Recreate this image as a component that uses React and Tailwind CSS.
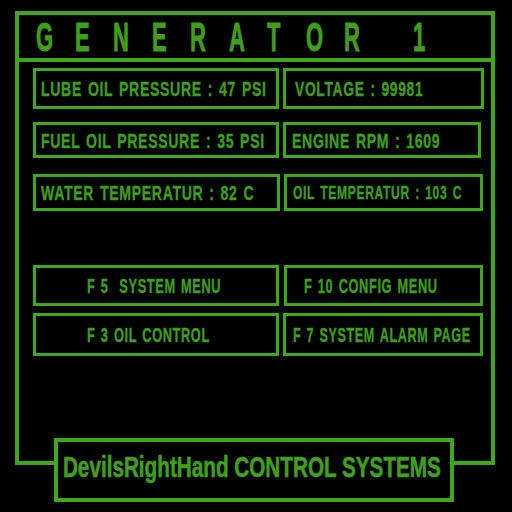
const GREEN = 'border-[#3ea81a]';

const titleLetters = ['G', 'E', 'N', 'E', 'R', 'A', 'T', 'O', 'R', '', '1'];

// condensed look: Liberation Sans Bold squeezed horizontally
const DataBox = ({ width, height, pad, squeeze = 'scale-x-[0.67]', size = 'text-[21px]', children }) => (
  <div className={`${width} ${height} ${pad} shrink-0 border-[3px] ${GREEN} flex items-center`}>
    <span
      className={`inline-block origin-left ${squeeze} ${size} font-bold tracking-[1px] [word-spacing:2px] text-[#3f9e1c] [-webkit-text-stroke:0.4px_#3f9e1c] whitespace-pre leading-none`}
    >
      {children}
    </span>
  </div>
);

export default function App() {
  return (
    <div className="relative w-[512px] h-[512px] bg-black overflow-hidden font-['Liberation_Sans',Arial,sans-serif]">
      <div className="pt-[11px] pl-[15px]">
        <div className={`w-[480px] h-[454px] border-4 ${GREEN} flex flex-col`}>
          {/* Title */}
          <div className={`h-[47px] shrink-0 border-b-4 ${GREEN} flex items-center pl-[17px] pt-[1px]`}>
            {titleLetters.map((l, i) => (
              <span key={i} className={`${l ? 'w-[38.5px]' : 'w-[30px]'} shrink-0`}>
                <span className="inline-block origin-left scale-x-[0.55] text-[40px] font-bold leading-none text-[#3f9e1c] [-webkit-text-stroke:1px_#3f9e1c]">
                  {l}
                </span>
              </span>
            ))}
          </div>

          {/* Readings */}
          <div className="pl-[14px] pt-[6px] flex flex-col">
            <div className="flex gap-[4px]">
              <DataBox width="w-[246px]" height="h-[41px]" pad="pl-[5px]">LUBE OIL PRESSURE : 47 PSI</DataBox>
              <DataBox width="w-[201px]" height="h-[41px]" pad="pl-[9px]" squeeze="scale-x-[0.66]">VOLTAGE : 99981</DataBox>
            </div>
            <div className="flex gap-[4px] mt-[13px]">
              <DataBox width="w-[246px]" height="h-[36px]" pad="pl-[5px]">FUEL OIL PRESSURE : 35 PSI</DataBox>
              <DataBox width="w-[198px]" height="h-[36px]" pad="pl-[6px]">ENGINE RPM : 1609</DataBox>
            </div>
            <div className="flex gap-[4px] mt-[16px]">
              <DataBox width="w-[247px]" height="h-[37px]" pad="pl-[5px]">WATER TEMPERATUR : 82 C</DataBox>
              <DataBox width="w-[199px]" height="h-[37px]" pad="pl-[6px]" size="text-[18px]">OIL TEMPERATUR : 103 C</DataBox>
            </div>

            {/* Function keys */}
            <div className="flex gap-[5px] mt-[54px]">
              <DataBox width="w-[246px]" height="h-[41px]" pad="pl-[51px]" squeeze="scale-x-[0.61]">F 5  SYSTEM MENU</DataBox>
              <DataBox width="w-[199px]" height="h-[41px]" pad="pl-[17px]" squeeze="scale-x-[0.61]">F 10 CONFIG MENU</DataBox>
            </div>
            <div className="flex gap-[4px] mt-[7px]">
              <DataBox width="w-[246px]" height="h-[43px]" pad="pl-[51px]" squeeze="scale-x-[0.61]">F 3 OIL CONTROL</DataBox>
              <DataBox width="w-[200px]" height="h-[43px]" pad="pl-[7px]" squeeze="scale-x-[0.6]">F 7 SYSTEM ALARM PAGE</DataBox>
            </div>
          </div>
        </div>
      </div>

      {/* Footer plate sits over the frame's bottom edge */}
      <div className={`absolute left-[54px] top-[438px] w-[400px] h-[64px] border-4 ${GREEN} bg-black flex items-center justify-center pb-[6px] pr-[4px]`}>
        <span className="inline-block shrink-0 origin-center scale-x-[0.69] text-[30px] font-bold text-[#40a01e] [-webkit-text-stroke:0.6px_#40a01e] leading-none whitespace-pre">
          DevilsRightHand CONTROL SYSTEMS
        </span>
      </div>
    </div>
  );
}
